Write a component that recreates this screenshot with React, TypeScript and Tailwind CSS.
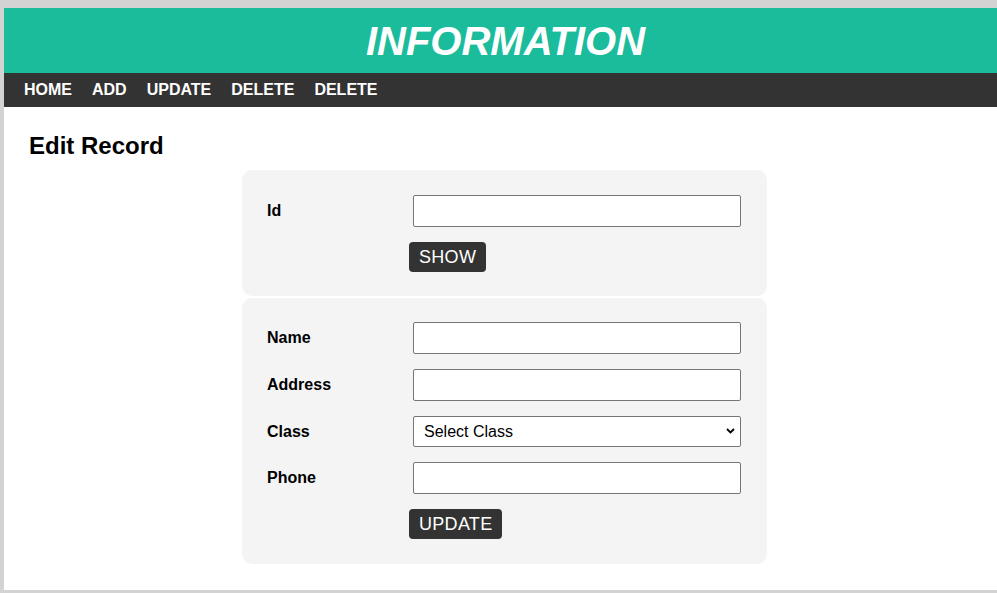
const navItems = ["HOME", "ADD", "UPDATE", "DELETE", "DELETE"]

const font = { fontFamily: '"Liberation Sans", Arial, sans-serif' }

const Field = ({ label }: { label: string }) => (
  <div className="flex items-center">
    <label className="w-[146px] text-base font-bold text-black">{label}</label>
    <input
      type="text"
      className="h-[32px] w-[328px] rounded-[2px] border border-[#767676] bg-white px-2 text-base"
    />
  </div>
)

const DarkButton = ({ text }: { text: string }) => (
  <button className="ml-[142px] h-[30px] rounded-[4px] bg-[#333333] px-[10px] text-[18px] leading-none tracking-[0.3px] text-white">
    {text}
  </button>
)

export default function App() {
  return (
    <div className="min-h-screen bg-[#d3d3d3] pl-[4px] pt-[8px]" style={font}>
      <div className="bg-white pb-[26px]">
        <header className="flex h-[65px] items-center justify-center bg-[#1abc9c] pl-[10px]">
          <h1 className="text-[40px] font-bold italic leading-none text-white">
            INFORMATION
          </h1>
        </header>
        <nav className="flex h-[34px] items-center bg-[#333333] px-[10px]">
          {navItems.map((item, i) => (
            <a
              key={i}
              href="#"
              className="px-[10px] text-base font-bold text-white"
            >
              {item}
            </a>
          ))}
        </nav>

        <h2 className="ml-[25px] mt-[25px] text-[24px] font-bold leading-[28px] text-black">
          Edit Record
        </h2>

        <div className="ml-[238px] mt-[10px] flex w-[525px] flex-col gap-[2px]">
          <div className="flex flex-col gap-[15px] rounded-[10px] bg-[#f4f4f4] px-[25px] pb-[24px] pt-[25px]">
            <Field label="Id" />
            <div>
              <DarkButton text="SHOW" />
            </div>
          </div>

          <div className="flex flex-col gap-[15px] rounded-[10px] bg-[#f4f4f4] px-[25px] pb-[25px] pt-[24px]">
            <Field label="Name" />
            <Field label="Address" />
            <div className="flex items-center">
              <label className="w-[146px] text-base font-bold text-black">Class</label>
              <div className="relative">
                <select className="h-[31px] w-[328px] appearance-none rounded-[2px] border border-[#767676] bg-white pl-[10px] text-base text-black">
                  <option>Select Class</option>
                </select>
                <svg
                  className="pointer-events-none absolute right-[6px] top-[12px]"
                  width="9"
                  height="6"
                  viewBox="0 0 9 6"
                >
                  <path d="M1 1l3.5 3.5L8 1" stroke="#000" strokeWidth="1.8" fill="none" />
                </svg>
              </div>
            </div>
            <Field label="Phone" />
            <div>
              <DarkButton text="UPDATE" />
            </div>
          </div>
        </div>
      </div>
    </div>
  )
}
